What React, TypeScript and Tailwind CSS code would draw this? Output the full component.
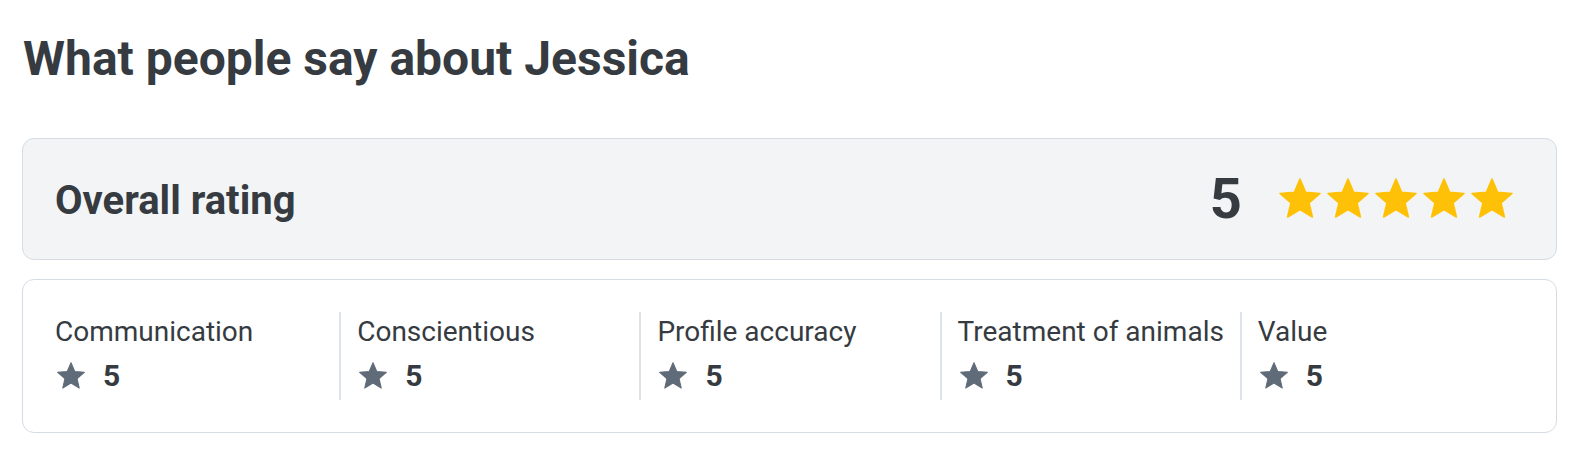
import React from "react";

const STAR = "M12 17.27L18.18 21l-1.64-7.03L22 9.24l-7.19-.61L12 2 9.19 8.63 2 9.24l5.46 4.73L5.82 21z";

function Star({ className }: { className: string }) {
  return (
    <svg viewBox="0 0 24 24" className={className} aria-hidden="true">
      <path d={STAR} fill="currentColor" stroke="currentColor" strokeWidth={0.8} strokeLinejoin="round" />
    </svg>
  );
}

const items = [
  "Communication",
  "Conscientious",
  "Profile accuracy",
  "Treatment of animals",
  "Value",
];

export default function App() {
  return (
    <div
      className="bg-white w-[1572px] h-[462px] pt-[30px] pl-[22px] text-[#363b41]"
      style={{ fontFamily: "Roboto, 'Noto Sans', sans-serif" }}
    >
      <h1 className="ml-px text-[48px] leading-[58px] font-bold tracking-normal">
        What people say about Jessica
      </h1>

      <div className="mt-[50px] w-[1535px] h-[122px] flex items-center justify-between rounded-[12px] border border-[#d5dce4] bg-[#f3f4f6] pl-8 pr-[40px]">
        <div className="pt-1 text-[40px] font-bold leading-none">Overall rating</div>
        <div className="flex items-center gap-[34px]">
          <div className="text-[56px] font-bold leading-none">5</div>
          <div className="flex items-center">
            {[0, 1, 2, 3, 4].map((i) => (
              <Star key={i} className="w-12 h-12 text-[#ffc107]" />
            ))}
          </div>
        </div>
      </div>

      <div className="mt-[19px] w-[1535px] rounded-[12px] border border-[#d5dce4] bg-white px-4 py-8 grid grid-cols-5">
        {items.map((label, i) => (
          <div
            key={label}
            className={`pl-4 h-[88px] flex flex-col ${i > 0 ? "border-l-2 border-[#dde3e9]" : ""}`}
          >
            <div className="text-[28px] leading-[40px] font-normal whitespace-nowrap">{label}</div>
            <div className="h-12 flex items-center gap-4">
              <Star className="w-8 h-8 text-[#5f6b78]" />
              <span className="text-[30px] font-bold leading-none">5</span>
            </div>
          </div>
        ))}
      </div>
    </div>
  );
}
